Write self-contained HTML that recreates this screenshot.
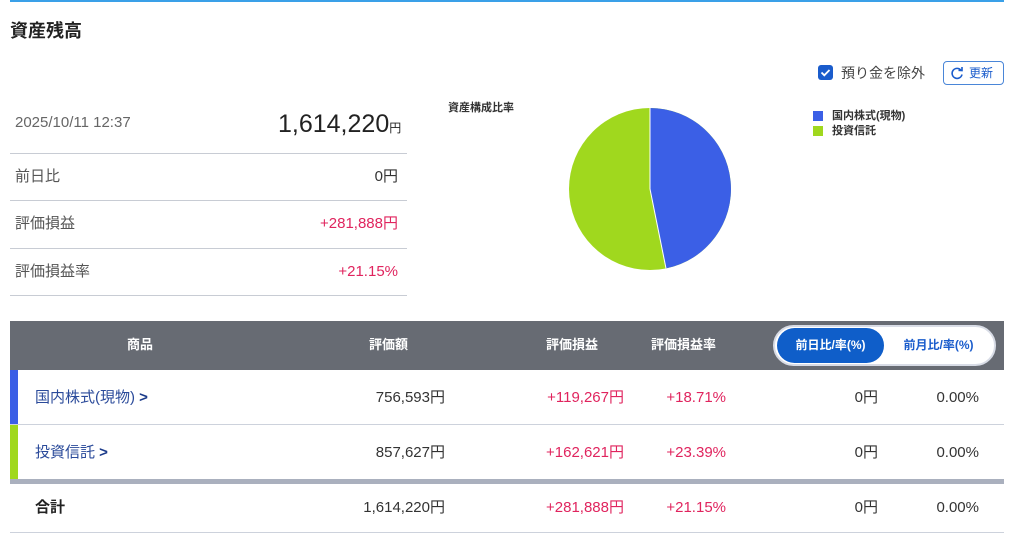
<!DOCTYPE html>
<html><head><meta charset="utf-8"><style>
*{margin:0;padding:0;box-sizing:border-box}
body{width:1024px;height:544px;background:#fff;font-family:"Liberation Sans","Noto Sans CJK JP",sans-serif;color:#333;position:relative;overflow:hidden}
.a{position:absolute;white-space:nowrap;line-height:20px}
.r{text-align:right}
.pk{color:#e0245e}
.hl{position:absolute;left:10px;width:397px;height:1px;background:#c8ccd4}
.th{color:#fff;font-weight:bold;font-size:13px}
.row{position:absolute;left:10px;width:994px;border-bottom:1px solid #cdd2dc}
</style></head><body>
<div class="a" style="left:10px;top:0;width:994px;height:2px;background:#3aa0e8"></div>
<div class="a" style="left:10px;top:21px;font-size:18px;font-weight:bold;color:#222">資産残高</div>

<div class="a" style="left:15px;top:113px;font-size:15px;color:#666">2025/10/11 12:37</div>
<div class="a" style="left:278px;top:111px;font-size:25px;color:#222;line-height:26px">1,614,220<span style="font-size:12px">円</span></div>
<div class="hl" style="top:153px"></div>
<div class="a" style="left:15px;top:167px;font-size:15px;color:#555">前日比</div>
<div class="a r" style="right:626px;top:167px;font-size:15px">0円</div>
<div class="hl" style="top:200px"></div>
<div class="a" style="left:15px;top:214px;font-size:15px;color:#555">評価損益</div>
<div class="a r pk" style="right:626px;top:214px;font-size:15px">+281,888円</div>
<div class="hl" style="top:248px"></div>
<div class="a" style="left:15px;top:262px;font-size:15px;color:#555">評価損益率</div>
<div class="a r pk" style="right:626px;top:262px;font-size:15px">+21.15%</div>
<div class="hl" style="top:295px"></div>

<div class="a" style="left:448px;top:98px;font-size:11px;font-weight:bold;color:#333">資産構成比率</div>
<svg class="a" style="left:560px;top:100px" width="180" height="180" viewBox="560 100 180 180">
<circle cx="650" cy="189" r="81" fill="#a0d81e"/>
<path d="M650 189 L650 108 A81 81 0 0 1 666 268.4 Z" fill="#3b5fe6"/>
<line x1="650" y1="189" x2="650" y2="108" stroke="#fff" stroke-width="1"/>
<line x1="650" y1="189" x2="666" y2="268.4" stroke="#fff" stroke-width="1"/>
</svg>

<div class="a" style="left:818px;top:65px;width:15px;height:15px;background:#1a5ccc;border-radius:3px"></div>
<svg class="a" style="left:818px;top:65px" width="15" height="15"><path d="M3.5 7.5l2.8 2.8 5.2-5.3" stroke="#fff" stroke-width="1.8" fill="none"/></svg>
<div class="a" style="left:841px;top:63px;font-size:14px;color:#444">預り金を除外</div>
<div class="a" style="left:943px;top:61px;width:61px;height:24px;border:1px solid #4a86d8;border-radius:4px;font-size:12px;color:#1a5ccc;padding:1px 0 0 25px">更新</div>
<svg class="a" style="left:950px;top:66px" width="14" height="14"><path d="M11 4.2A5 5 0 1 0 12 8.5" stroke="#1a5ccc" stroke-width="1.6" fill="none"/><path d="M8.5 4.3L12 4.5 12 1" stroke="#1a5ccc" stroke-width="1.6" fill="none"/></svg>

<div class="a" style="left:813px;top:111px;width:10px;height:10px;background:#3b5fe6"></div>
<div class="a" style="left:832px;top:106px;font-size:11px;font-weight:bold;color:#333">国内株式(現物)</div>
<div class="a" style="left:813px;top:126px;width:10px;height:10px;background:#a0d81e"></div>
<div class="a" style="left:832px;top:121px;font-size:11px;font-weight:bold;color:#333">投資信託</div>

<div class="a" style="left:10px;top:321px;width:994px;height:49px;background:#676b73"></div>
<div class="a th" style="left:127px;top:335px">商品</div>
<div class="a th" style="left:369px;top:335px">評価額</div>
<div class="a th" style="left:546px;top:335px">評価損益</div>
<div class="a th" style="left:651px;top:335px">評価損益率</div>
<div class="a" style="left:773px;top:325px;width:223px;height:41px;background:#fff;border:2px solid #d8dce6;border-radius:21px"></div>
<div class="a" style="left:777px;top:328px;width:107px;height:35px;background:#0f5ec9;border-radius:18px;color:#fff;font-size:12px;font-weight:bold;text-align:center;line-height:35px">前日比/率(%)</div>
<div class="a" style="left:886px;top:328px;width:105px;height:35px;color:#1a5ccc;font-size:12px;font-weight:bold;text-align:center;line-height:35px">前月比/率(%)</div>

<div class="row" style="top:370px;height:55px"></div>
<div class="a" style="left:10px;top:370px;width:8px;height:54px;background:#3b5fe6"></div>
<div class="a" style="left:35px;top:388px;font-size:15px;color:#2a4a9a">国内株式(現物) <b style="color:#1a3a8a">&gt;</b></div>
<div class="a" style="left:10px;top:425px;width:8px;height:55px;background:#a0d81e"></div>
<div class="a" style="left:35px;top:443px;font-size:15px;color:#2a4a9a">投資信託 <b style="color:#1a3a8a">&gt;</b></div>
<div class="a" style="left:10px;top:479px;width:994px;height:5px;background:#aab0be"></div>
<div class="row" style="top:484px;height:49px"></div>
<div class="a" style="left:35px;top:498px;font-size:15px;font-weight:bold;color:#222">合計</div>

<div class="a r" style="right:579px;top:388px;font-size:15px">756,593円</div>
<div class="a r pk" style="right:400px;top:388px;font-size:15px">+119,267円</div>
<div class="a r pk" style="right:298px;top:388px;font-size:15px">+18.71%</div>
<div class="a r" style="right:146px;top:388px;font-size:15px">0円</div>
<div class="a r" style="right:45px;top:388px;font-size:15px">0.00%</div>

<div class="a r" style="right:579px;top:443px;font-size:15px">857,627円</div>
<div class="a r pk" style="right:400px;top:443px;font-size:15px">+162,621円</div>
<div class="a r pk" style="right:298px;top:443px;font-size:15px">+23.39%</div>
<div class="a r" style="right:146px;top:443px;font-size:15px">0円</div>
<div class="a r" style="right:45px;top:443px;font-size:15px">0.00%</div>

<div class="a r" style="right:579px;top:498px;font-size:15px">1,614,220円</div>
<div class="a r pk" style="right:400px;top:498px;font-size:15px">+281,888円</div>
<div class="a r pk" style="right:298px;top:498px;font-size:15px">+21.15%</div>
<div class="a r" style="right:146px;top:498px;font-size:15px">0円</div>
<div class="a r" style="right:45px;top:498px;font-size:15px">0.00%</div>
</body></html>
